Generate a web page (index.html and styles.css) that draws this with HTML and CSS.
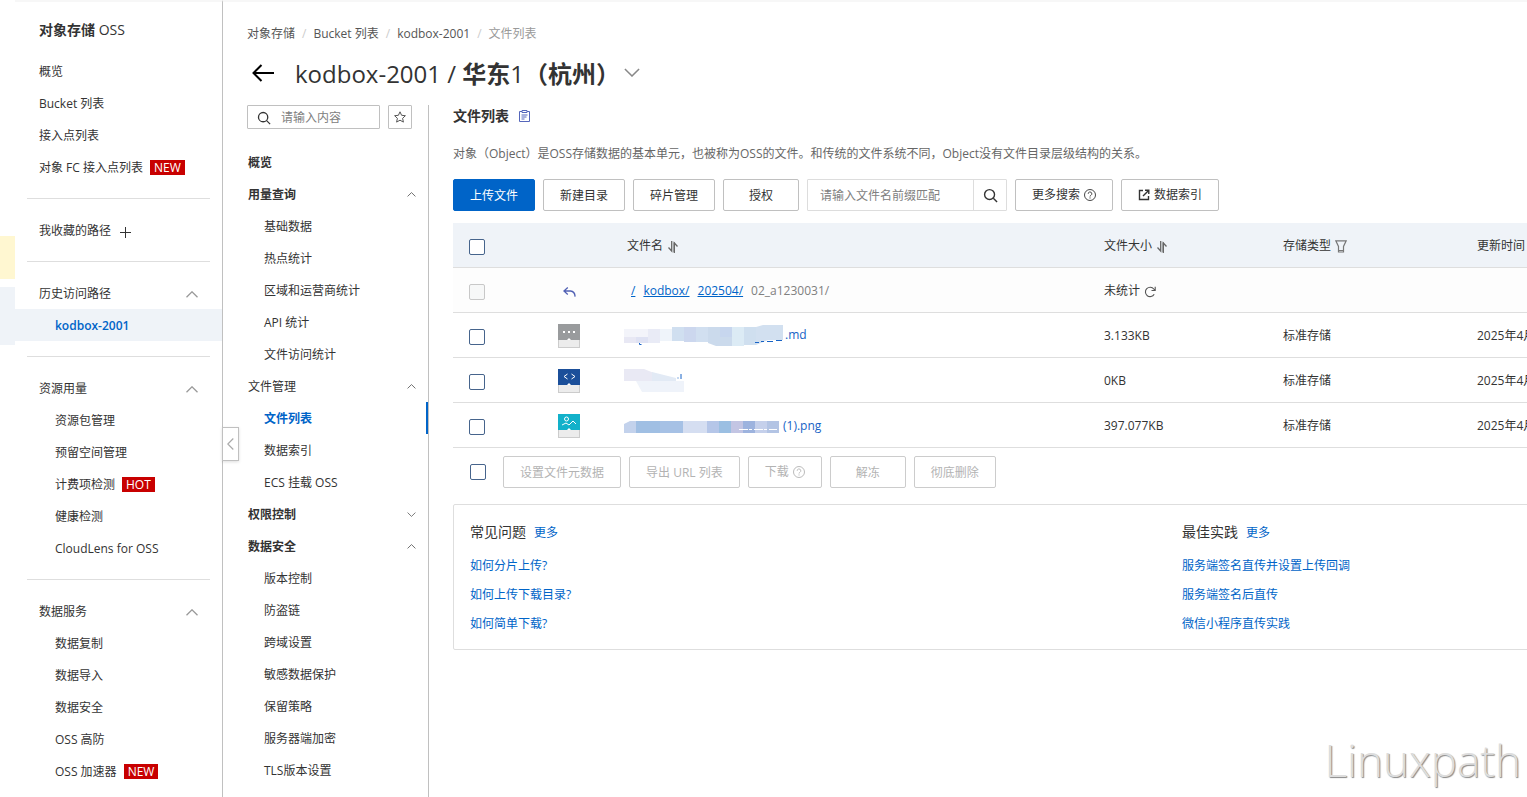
FILE: index.html
```html
<!DOCTYPE html>
<html lang="zh-CN">
<head>
<meta charset="utf-8">
<title>文件列表 - 对象存储 OSS</title>
<link rel="stylesheet" href="styles.css">
</head>
<body>
<svg class="defs" aria-hidden="true">
  <symbol id="up" viewBox="0 0 12 7"><path d="M.5 6.2 6 .8l5.500 5.400" fill="none" stroke="currentColor" stroke-width="1.300"/></symbol>
  <symbol id="down" viewBox="0 0 12 7"><path d="M.5.8 6 6.200 11.500.8" fill="none" stroke="currentColor" stroke-width="1.200"/></symbol>
  <symbol id="search" viewBox="0 0 16 16"><circle cx="7" cy="7" r="5.300" fill="none" stroke="currentColor" stroke-width="1.500"/><path d="m11 11 4 4" stroke="currentColor" stroke-width="1.500"/></symbol>
  <symbol id="help" viewBox="0 0 12 12"><circle cx="6" cy="6" r="5.500" fill="none" stroke="currentColor" stroke-width=".9"/><path d="M4.200 4.800a1.800 1.800 0 1 1 2.700 1.500Q6 6.800 6 7.500M6 8.400v1.100" fill="none" stroke="currentColor" stroke-width=".9"/></symbol>
  <symbol id="sort" viewBox="0 0 10 12"><path d="M3.700 0v10L.5 6.500" fill="none" stroke="currentColor" stroke-width="1.300"/><path d="M6.300 12V2l3.200 3.500" fill="none" stroke="currentColor" stroke-width="1.300"/><path d="M5.600 1.500h1.400V11H5.600z" fill="currentColor"/></symbol>
</svg>
<div class="app">
  <div class="edge"><i class="edge-note"></i><i class="edge-item"></i></div>
  <nav class="side">
    <h1 class="side-title"><b>对象存储</b> OSS</h1>
    <a class="item" href="#">概览</a>
    <a class="item" href="#">Bucket 列表</a>
    <a class="item" href="#">接入点列表</a>
    <a class="item" href="#">对象 FC 接入点列表<span class="tag">NEW</span></a>
    <hr>
    <button class="item" type="button">我收藏的路径<svg class="plus" viewBox="0 0 11 11"><path d="M5.500 0v11M0 5.500h11" stroke="currentColor"/></svg></button>
    <hr>
    <button class="item" type="button">历史访问路径<svg class="chev"><use href="#up"/></svg></button>
    <a class="item sub active" href="#">kodbox-2001</a>
    <hr>
    <button class="item" type="button">资源用量<svg class="chev"><use href="#up"/></svg></button>
    <a class="item sub" href="#">资源包管理</a>
    <a class="item sub" href="#">预留空间管理</a>
    <a class="item sub" href="#">计费项检测<span class="tag">HOT</span></a>
    <a class="item sub" href="#">健康检测</a>
    <a class="item sub" href="#">CloudLens for OSS</a>
    <hr>
    <button class="item" type="button">数据服务<svg class="chev"><use href="#up"/></svg></button>
    <a class="item sub" href="#">数据复制</a>
    <a class="item sub" href="#">数据导入</a>
    <a class="item sub" href="#">数据安全</a>
    <a class="item sub" href="#">OSS 高防</a>
    <a class="item sub" href="#">OSS 加速器<span class="tag">NEW</span></a>
    <button class="fold" type="button" aria-label="收起"><svg viewBox="0 0 7 12"><path d="M6.300.5.800 6l5.500 5.500" fill="none" stroke="currentColor" stroke-width="1.200"/></svg></button>
  </nav>
  <div class="page">
    <header class="head">
      <nav class="crumbs"><a href="#">对象存储</a><i>/</i><a href="#">Bucket 列表</a><i>/</i><a href="#">kodbox-2001</a><i>/</i><span>文件列表</span></nav>
      <div class="title">
        <button class="back" type="button" aria-label="返回"><svg viewBox="0 0 22 18"><path d="M22 9H1.500M9.500 1l-8 8 8 8" fill="none" stroke="currentColor" stroke-width="2"/></svg></button>
        <h2>kodbox-2001 / <b>华东</b>1<b>（杭州）</b></h2>
        <svg class="title-chev"><use href="#down"/></svg>
      </div>
    </header>
    <div class="cols">
      <nav class="menu">
        <div class="menu-search">
          <label class="find"><svg><use href="#search"/></svg><input type="text" placeholder="请输入内容" aria-label="搜索菜单"></label>
          <button class="star" type="button" aria-label="收藏"><svg viewBox="0 0 12 12"><path d="m6 .8 1.600 3.500 3.800.4-2.800 2.600.8 3.800L6 9.200l-3.400 1.900.8-3.800L.6 4.700l3.800-.4z" fill="none" stroke="currentColor"/></svg></button>
        </div>
        <a class="m strong" href="#">概览</a>
        <button class="m strong" type="button">用量查询<svg><use href="#up"/></svg></button>
        <a class="m child" href="#">基础数据</a>
        <a class="m child" href="#">热点统计</a>
        <a class="m child" href="#">区域和运营商统计</a>
        <a class="m child" href="#">API 统计</a>
        <a class="m child" href="#">文件访问统计</a>
        <button class="m" type="button">文件管理<svg><use href="#up"/></svg></button>
        <a class="m child on" href="#">文件列表</a>
        <a class="m child" href="#">数据索引</a>
        <a class="m child" href="#">ECS 挂载 OSS</a>
        <button class="m strong" type="button">权限控制<svg><use href="#down"/></svg></button>
        <button class="m strong" type="button">数据安全<svg><use href="#up"/></svg></button>
        <a class="m child" href="#">版本控制</a>
        <a class="m child" href="#">防盗链</a>
        <a class="m child" href="#">跨域设置</a>
        <a class="m child" href="#">敏感数据保护</a>
        <a class="m child" href="#">保留策略</a>
        <a class="m child" href="#">服务器端加密</a>
        <a class="m child" href="#">TLS版本设置</a>
      </nav>
      <main class="main">
        <h3>文件列表<svg viewBox="0 0 11 12"><path d="M3 1.500H.5v10h10v-10H8M3 .5h5v2H3zM2.500 5h6M2.500 7h5M2.500 9h3" fill="none" stroke="currentColor"/></svg></h3>
        <p class="desc">对象（Object）是OSS存储数据的基本单元，也被称为OSS的文件。和传统的文件系统不同，Object没有文件目录层级结构的关系。</p>
        <div class="bar">
          <button class="btn primary" type="button">上传文件</button>
          <button class="btn" type="button">新建目录</button>
          <button class="btn" type="button">碎片管理</button>
          <button class="btn wide" type="button">授权</button>
          <div class="query"><input type="text" placeholder="请输入文件名前缀匹配" aria-label="文件名前缀"><button type="button" aria-label="搜索"><svg><use href="#search"/></svg></button></div>
          <button class="btn icon" type="button">更多搜索<svg class="i12"><use href="#help"/></svg></button>
          <button class="btn icon" type="button"><svg class="i12 lead" viewBox="0 0 12 12"><path d="M5 1.500H1.500v9h9V7M7 1.200h3.800V5M10.600 1.400 5 7" fill="none" stroke="currentColor" stroke-width="1.400"/></svg>数据索引</button>
        </div>
        <table class="files">
          <colgroup><col class="c1"><col class="c2"><col class="c3"><col class="c4"><col class="c5"><col></colgroup>
          <thead>
            <tr><th><input type="checkbox" aria-label="全选"></th><th></th><th>文件名<svg class="sort"><use href="#sort"/></svg></th><th>文件大小<svg class="sort"><use href="#sort"/></svg></th><th>存储类型<svg class="funnel" viewBox="0 0 12 13"><path d="M.8.800h10.400L8.500 6.500V12h-5V6.500zM3.500 10.500h5" fill="none" stroke="currentColor" stroke-width="1.200"/></svg></th><th>更新时间</th></tr>
          </thead>
          <tbody>
            <tr class="parent"><td><input type="checkbox" aria-label="上级目录" disabled></td><td><svg class="reply" viewBox="0 0 13 10"><path d="M4.800.6.900 4l3.900 3.400M1 4h6.500q4.300.3 4.600 5.600" fill="none" stroke="currentColor" stroke-width="1.300"/></svg></td><td class="path"><a href="#">/</a><a href="#">kodbox/</a><a href="#">202504/</a><span>02_a1230031/</span></td><td>未统计<svg class="reload" viewBox="0 0 12 12"><path d="M10.200 8.300A4.700 4.700 0 1 1 9.800 3L11 4.300M11.200.8v3.700H7.500" fill="none" stroke="currentColor" stroke-width="1.100"/></svg></td><td></td><td></td></tr>
            <tr><td><input type="checkbox" aria-label="选择 md 文件"></td>
              <td><svg class="ftype" viewBox="0 0 22 24"><path d="M0 0h22v24H0z" fill="#ccc"/><path d="M1 16h20v7H1z" fill="#ececec"/><path d="M0 0h22v16H0z" fill="#999b9d"/><path d="M5 7h2v2H5zm5 0h2v2h-2zm5 0h2v2h-2zM9 16l2-2 2 2z" fill="#fff"/></svg></td>
              <td><a class="name" href="#"><svg class="mosaic m1" viewBox="0 0 161 22"><path d="M0 4h24v8H0z" fill="#f3f4fa"/><path d="M0 12h12v6H0z" fill="#e8e8f4"/><path d="M12 12h12v6H12z" fill="#dfe2f3"/><path d="M24 4h12v14H24z" fill="#e9ebf6"/><path d="M36 4h12v12H36z" fill="#eff4fa"/><path d="M48 2h12v14H48z" fill="#d0dff0"/><path d="M60 2h12v15H60z" fill="#ccd7ee"/><path d="M72 2h12v15H72z" fill="#d1dff0"/><path d="M84 2h24v19H92l-8-3z" fill="#cbdaec"/><path d="M96 2h12v10H96z" fill="#c7d6ee"/><path d="M108 2h12v19h-12z" fill="#dcebf5"/><path d="M120 2h12v18h-12z" fill="#cfdfef"/><path d="m132 2 7-2h20v15h-15l-12 5z" fill="#d2e0f0"/><path d="M15.500 18v1.500h2M131 17.500h4M137 16.500h3m3 0h6m3-1h6" stroke="#1763c6" fill="none"/></svg>.md</a></td><td>3.133KB</td><td>标准存储</td><td>2025年4月</td></tr>
            <tr><td><input type="checkbox" aria-label="选择代码文件"></td>
              <td><svg class="ftype" viewBox="0 0 22 24"><path d="M0 0h22v24H0z" fill="#ccc"/><path d="M1 16h20v7H1z" fill="#ececec"/><path d="M0 0h22v16H0z" fill="#1b4f9a"/><path d="m9.500 5-3.500 2.500 3.500 2.500m4-5 3.500 2.500-3.500 2.500" fill="none" stroke="#fff"/><path d="m9 16 2-2 2 2z" fill="#fff"/></svg></td>
              <td><a class="name" href="#"><svg class="mosaic m2" viewBox="0 0 60 24"><path d="M0 0h20l10 4v8H0z" fill="#e9e9f4"/><path d="m28 3 24 6v5H28z" fill="#e2eaf5"/><path d="M12 12h48v11H18z" fill="#eff3fa"/><path d="M57 5v5M54 8.500v1" stroke="#1763c6"/></svg></a></td><td>0KB</td><td>标准存储</td><td>2025年4月</td></tr>
            <tr><td><input type="checkbox" aria-label="选择 png 文件"></td>
              <td><svg class="ftype" viewBox="0 0 22 24"><path d="M0 0h22v24H0z" fill="#ccc"/><path d="M1 16h20v7H1z" fill="#ececec"/><path d="M0 0h22v16H0z" fill="#12b1ca"/><circle cx="8.500" cy="5" r="2" fill="none" stroke="#fff"/><path d="m4 11 4-2 3 2 4-4 3 3" fill="none" stroke="#fff"/><path d="m9 16 2-2 2 2z" fill="#fff"/></svg></td>
              <td><a class="name" href="#"><svg class="mosaic m3" viewBox="0 0 155 12"><path d="M0 3 6 0h6v12H0z" fill="#c3d2ec"/><path d="M12 0h24v12H12z" fill="#a0bfe3"/><path d="M36 0h23v12H36z" fill="#a6c1e5"/><path d="M59 0h24v12H59z" fill="#d5def1"/><path d="M83 0h12v12H83z" fill="#b5c6e8"/><path d="M95 0h12v12H95z" fill="#9bbfe2"/><path d="M107 0h12v12h-12z" fill="#c3c5e3"/><path d="M119 0h12v12h-12z" fill="#9db3de"/><path d="M131 0h12v12h-12z" fill="#c5d0eb"/><path d="M143 0h12v12h-12z" fill="#b3c4e4"/><path d="M115 8.500h38" stroke="#fff" stroke-dasharray="9 1 3 2"/></svg>(1).png</a></td><td>397.077KB</td><td>标准存储</td><td>2025年4月</td></tr>
          </tbody>
        </table>
        <div class="batch">
          <input type="checkbox" aria-label="选择全部文件">
          <button class="btn" type="button" disabled>设置文件元数据</button>
          <button class="btn" type="button" disabled>导出 URL 列表</button>
          <button class="btn icon" type="button" disabled>下载<svg class="i12"><use href="#help"/></svg></button>
          <button class="btn wide" type="button" disabled>解冻</button>
          <button class="btn" type="button" disabled>彻底删除</button>
        </div>
        <div class="card">
          <section><h4>常见问题<a href="#">更多</a></h4><a href="#">如何分片上传?</a><a href="#">如何上传下载目录?</a><a href="#">如何简单下载?</a></section>
          <section><h4>最佳实践<a href="#">更多</a></h4><a href="#">服务端签名直传并设置上传回调</a><a href="#">服务端签名后直传</a><a href="#">微信小程序直传实践</a></section>
        </div>
      </main>
    </div>
  </div>
  <div class="mark">Linuxpath</div>
</div>
</body>
</html>
```
FILE: styles.css
```css
* { box-sizing: border-box; }
body { margin: 0; overflow: hidden; background: #fff; color: #333; font: 12px/18px "Open Sans", "Noto Sans CJK SC", sans-serif; }
button, input { font: inherit; color: inherit; }
button { background: none; border: 0; padding: 0; margin: 0; }
a { color: inherit; text-decoration: none; }
h1, h2, h3, h4, p { margin: 0; font-weight: 400; }
svg { display: block; flex: none; }
i { font-style: normal; }
.defs { position: absolute; width: 0; height: 0; }
.app { position: relative; display: flex; height: 100vh; min-height: 100%; overflow: hidden; }

.edge { flex: none; width: 15px; display: flex; flex-direction: column; gap: 8px; padding-top: 236px; }
.edge-note { height: 43px; background: #fff7d1; }
.edge-item { height: 58px; background: #eff3f8; }

.side { position: relative; flex: none; width: 208px; border-right: 1px solid #c0c0c0; border-top: 2px solid #f7f7f7; }
.side-title { font-size: 14px; line-height: 24px; padding: 16px 24px 13px; }
.item { display: flex; align-items: center; width: 100%; height: 32px; padding: 2px 24px 0; text-align: left; white-space: nowrap; }
.item.sub { padding-left: 40px; }
.item.active { background: #eff3f8; color: #0064c8; font-weight: 600; }
.side hr { margin: 15px 12px; border: 0; height: 1px; background: #dedede; }
.tag { margin: -1px 0 0 7px; padding: 0 4px; height: 15px; line-height: 15px; background: #c80000; color: #fff; }
.plus { width: 11px; height: 11px; margin: 3px 0 0 9px; }
.chev { width: 12px; height: 7px; margin-left: auto; color: #999; }
.fold { position: absolute; left: 207px; top: 425px; width: 17px; height: 34px; display: grid; place-items: center; background: #fff; border: 1px solid #c0c0c0; color: #aaa; box-shadow: 0 1px 3px #0002; }
.fold svg { width: 7px; height: 12px; }

.page { flex: 1; min-width: 0; padding-left: 24px; border-top: 2px solid #f7f7f7; overflow: hidden; }
.crumbs { display: flex; gap: 7px; padding-top: 23px; color: #555; }
.crumbs i { color: #ccc; }
.crumbs span { color: #999; }
.title { display: flex; align-items: center; height: 36px; margin: 13px 0 13px; }
.back { width: 22px; margin: 0 21px 2px 5px; color: #000; }
.back svg { width: 22px; height: 18px; }
.title h2 { font-size: 24px; line-height: 36px; font-weight: 500; white-space: nowrap; }
.title-chev { width: 16px; height: 9px; margin: 0 0 3px 4px; color: #888; }
.cols { display: flex; }

.menu { flex: none; width: 182px; height: 700px; border-right: 1px solid #c0c0c0; }
.menu-search { display: flex; gap: 8px; margin-bottom: 17px; }
.find { display: flex; align-items: center; gap: 10px; width: 133px; height: 24px; padding: 2px 0 0 9px; border: 1px solid #c0c0c0; border-radius: 1px; }
.find svg { width: 14px; height: 14px; }
.find input { flex: 1; min-width: 0; border: 0; padding: 0; outline: 0; background: none; }
::placeholder { color: #808080; opacity: 1; }
.star { width: 24px; height: 24px; display: grid; place-items: center; border: 1px solid #c0c0c0; border-radius: 1px; }
.star svg { width: 12px; height: 12px; color: #555; }
.m { display: flex; align-items: center; width: 181px; height: 32px; padding: 2px 12px 0 1px; text-align: left; }
.m.strong { font-weight: 600; }
.m.child { padding-left: 17px; }
.m.on { color: #0064c8; font-weight: 700; border-right: 2px solid #0064c8; }
.m svg { width: 9px; height: 5px; margin: -2px 0 0 auto; color: #666; }

.main { flex: 1; min-width: 0; margin-left: 24px; white-space: nowrap; }
.main h3 { display: flex; align-items: center; gap: 10px; font-size: 14px; line-height: 22px; font-weight: 600; }
.main h3 svg { width: 11px; height: 12px; color: #5566bb; }
.desc { margin: 18px 0 16px; color: #666; }
.bar { display: flex; gap: 8px; margin-bottom: 12px; }
.btn { display: flex; align-items: center; justify-content: center; height: 32px; padding: 2px 16px 0; border: 1px solid #c0c0c0; border-radius: 2px; background: #fff; white-space: nowrap; }
.btn.icon { padding-top: 0; }
.btn.primary { background: #0064c8; border-color: #0064c8; color: #fff; }
.btn.wide { width: 76px; }
.btn:disabled { color: #b3b3b3; border-color: #ccc; }
.i12 { width: 12px; height: 12px; margin-left: 4px; }
.i12.lead { margin: 0 4px 0 0; }
.query { display: flex; width: 200px; height: 32px; border: 1px solid #ddd; border-radius: 1px; }
.query input { flex: 1; min-width: 0; padding: 2px 0 0 12px; border: 0; outline: 0; background: none; }
.query button { width: 33px; display: grid; place-items: center; border-left: 1px solid #ddd; }
.query svg { width: 15px; height: 15px; }

input[type=checkbox] { appearance: none; display: block; flex: none; width: 16px; height: 16px; margin: 0; border: 1px solid #46648c; border-radius: 2px; background: #fff; }
input[type=checkbox]:disabled { border-color: #c8c8c8; background: #f7f8f8; }
.files { width: 100%; min-width: 1458px; table-layout: fixed; border-collapse: separate; border-spacing: 0; }
.c1 { width: 89px; } .c2 { width: 69px; } .c3 { width: 477px; } .c4 { width: 179px; } .c5 { width: 194px; }
.files th, .files td { height: 45px; padding: 2px 16px 0; border-bottom: 1px solid #dedede; text-align: left; font-weight: 400; }
.files th { background: #eff3f8; }
.files input { margin-top: 2px; }
.files svg { display: inline-block; vertical-align: middle; }
.files .sort { width: 10px; height: 12px; margin-left: 5px; color: #666; }
.files .funnel { width: 12px; height: 13px; margin-left: 4px; color: #777; }
.files .reload { width: 12px; height: 12px; margin-left: 4px; color: #555; }
.files .reply { width: 13px; height: 10px; margin-left: 5px; color: #5060b4; }
.files .ftype { display: block; width: 22px; height: 24px; }
.files .parent { background: #fdfdfd; }
.files .path { padding-left: 20px; }
.path a { color: #0064c8; text-decoration: underline; margin-right: 8px; }
.path span { color: #808080; }
.name { margin-left: -3px; color: #1763c6; }
.files .m1 { width: 161px; height: 22px; }
.files .m2 { width: 60px; height: 24px; }
.files .m3 { width: 155px; height: 12px; margin-right: 4px; }
.batch { display: flex; align-items: center; gap: 8px; margin: 8px 0 16px 17px; }
.batch input[type=checkbox] { margin-right: 9px; }
.card { display: flex; width: 100%; min-width: 1458px; padding: 16px 16px 5px; border: 1px solid #dedede; border-radius: 2px; }
.card section { flex: 1; display: flex; flex-direction: column; align-items: flex-start; }
.card a { color: #0064c8; line-height: 18px; margin-bottom: 11px; }
.card h4 { font-size: 14px; line-height: 22px; margin-bottom: 14px; }
.card h4 a { font-size: 12px; margin-left: 8px; }
.mark { position: absolute; right: 6px; bottom: 7px; font-size: 44px; line-height: 60px; font-weight: 300; color: #ddd; text-shadow: 1px 1px 1px #888; }
```
